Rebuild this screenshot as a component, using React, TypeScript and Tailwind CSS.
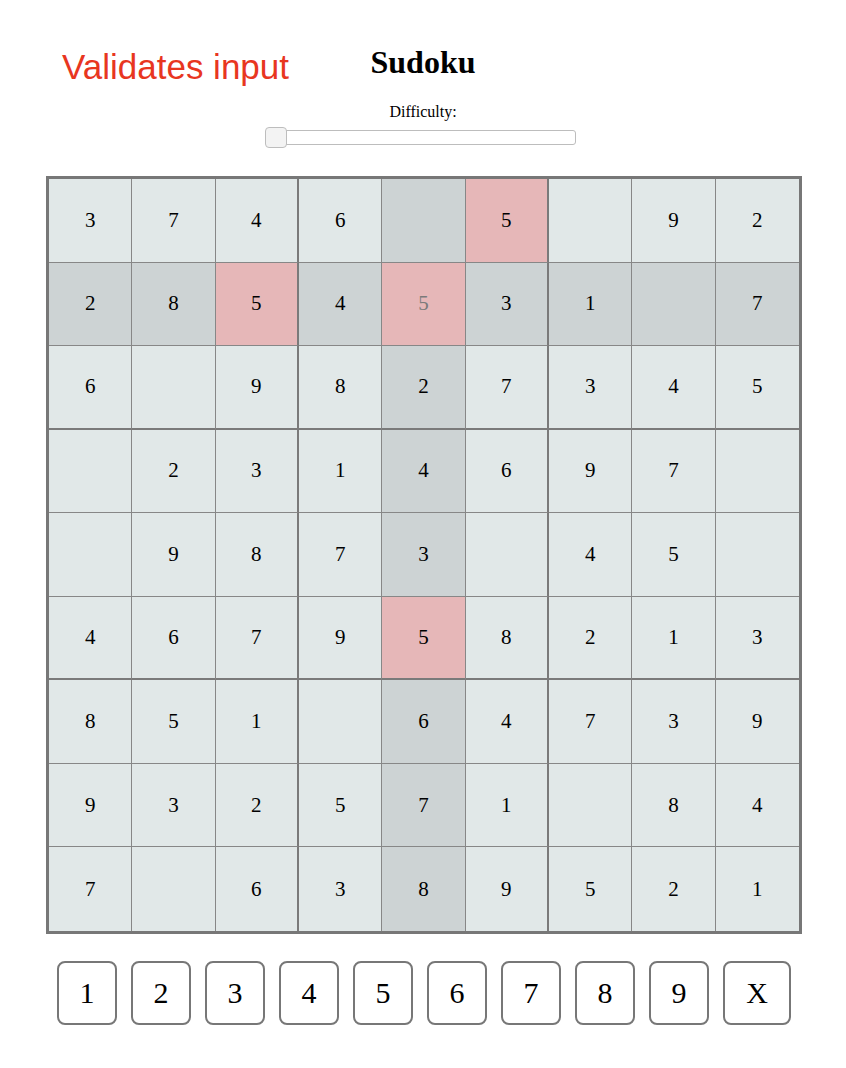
import React from "react";

const grid: (number | null)[][] = [
  [3, 7, 4, 6, null, 5, null, 9, 2],
  [2, 8, 5, 4, 5, 3, 1, null, 7],
  [6, null, 9, 8, 2, 7, 3, 4, 5],
  [null, 2, 3, 1, 4, 6, 9, 7, null],
  [null, 9, 8, 7, 3, null, 4, 5, null],
  [4, 6, 7, 9, 5, 8, 2, 1, 3],
  [8, 5, 1, null, 6, 4, 7, 3, 9],
  [9, 3, 2, 5, 7, 1, null, 8, 4],
  [7, null, 6, 3, 8, 9, 5, 2, 1],
];

const selR = 1;
const selC = 4;
const conflicts = new Set(["0-5", "1-2", "1-4", "5-4"]);

function cellClasses(r: number, c: number) {
  const cls: string[] = [
    "flex items-center justify-center text-[21px] leading-none",
  ];
  if (c < 8) {
    if (c === 2 || c === 5) cls.push("border-r-2 border-r-[#7a7a7a]");
    else cls.push("border-r border-r-[#878787]");
  }
  if (r < 8) {
    if (r === 2 || r === 5) cls.push("border-b-2 border-b-[#7a7a7a]");
    else cls.push("border-b border-b-[#878787]");
  }
  const key = `${r}-${c}`;
  if (conflicts.has(key)) cls.push("bg-[#e6b7b8]");
  else if (r === selR || c === selC) cls.push("bg-[#cdd3d4]");
  else cls.push("bg-[#e1e8e8]");
  if (r === selR && c === selC) cls.push("text-[#7a7a7a]");
  else cls.push("text-black");
  return cls.join(" ");
}

export default function App() {
  const buttons = ["1", "2", "3", "4", "5", "6", "7", "8", "9", "X"];
  return (
    <div className="relative w-[846px] min-h-[1068px] bg-white font-['Liberation_Serif','Times_New_Roman',serif]">
      <div className="absolute left-[62px] top-[47px] text-[35px] leading-[40px] text-[#e8361f] font-['Liberation_Sans',Arial,sans-serif]">
        Validates input
      </div>
      <div className="flex flex-col items-center pt-[44px]">
        <h1 className="text-[32px] leading-[36px] font-bold text-black">Sudoku</h1>
        <div className="mt-[23px] text-[16px] leading-[18px] text-black">Difficulty:</div>
        <div className="mt-[6px] mr-[6px] relative w-[311px] h-[21px] flex items-center">
          <div className="w-full h-[15px] rounded-[3px] border border-[#bdbdbd] bg-white" />
          <div className="absolute left-0 top-0 w-[22px] h-[21px] rounded-[4px] border border-[#bdbdbd] bg-[#f3f3f3]" />
        </div>
        <div className="mt-[28px] ml-[2px] w-[756px] h-[758px] border-[3px] border-[#777777] grid grid-cols-9 grid-rows-9">
          {grid.map((row, r) =>
            row.map((v, c) => (
              <div key={`${r}-${c}`} className={cellClasses(r, c)}>
                {v ?? ""}
              </div>
            ))
          )}
        </div>
        <div className="mt-[27px] ml-[2px] flex gap-[14px]">
          {buttons.map((b) => (
            <button
              key={b}
              className={`${b === "X" ? "w-[68px]" : "w-[60px]"} h-[64px] border-2 border-[#777777] rounded-[8px] bg-white text-[30px] leading-none text-black flex items-center justify-center`}
            >
              {b}
            </button>
          ))}
        </div>
      </div>
    </div>
  );
}
